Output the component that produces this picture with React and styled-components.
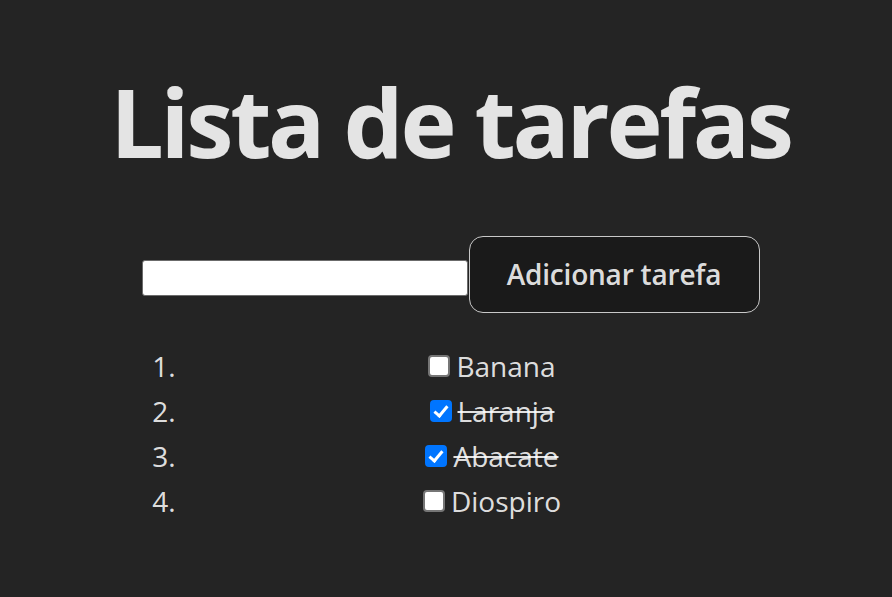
import React, { useState } from "react";
import styled, { createGlobalStyle } from "styled-components";

const GlobalStyle = createGlobalStyle`
  html, body {
    margin: 0;
    background-color: #242424;
  }

  body {
    font-family: "Open Sans", "Noto Sans", sans-serif;
    font-size: 28px;
    line-height: 1.5;
    color: rgba(255, 255, 255, 0.87);
    min-height: 100vh;
  }
`;

const Page = styled.div`
  width: 701px;
  margin-left: 100px;
  padding-top: 69px;
  text-align: center;
`;

const Title = styled.h1`
  margin: 0 -40px;
  font-size: 95px;
  font-weight: 700;
  line-height: 1.1;
  letter-spacing: -3.3px;
  white-space: nowrap;
  color: #e4e4e4;
`;

const Form = styled.form`
  margin-top: 62px;
  display: flex;
  justify-content: center;
  align-items: flex-start;
`;

const TaskInput = styled.input`
  box-sizing: border-box;
  width: 326px;
  height: 36px;
  margin-top: 24px;
  padding: 1px 4px;
  border: 1px solid #6b6b6b;
  border-radius: 3px;
  background: #ffffff;
  font-family: inherit;
  font-size: 20px;
  outline: none;
`;

const AddButton = styled.button`
  box-sizing: border-box;
  width: 291px;
  height: 77px;
  margin-left: 1px;
  border: 1px solid #c8c8c8;
  border-radius: 14px;
  background-color: #1a1a1a;
  color: rgba(255, 255, 255, 0.87);
  font-family: inherit;
  font-size: 28px;
  font-weight: 600;
  letter-spacing: -0.2px;
  cursor: pointer;
`;

const List = styled.ol`
  margin: 31px 0 0 0;
  padding-left: 83px;
`;

const Item = styled.li`
  line-height: 45px;
  text-align: center;
`;

const Check = styled.input`
  appearance: none;
  position: relative;
  box-sizing: border-box;
  width: 22px;
  height: 22px;
  margin: 0 6px 0 0;
  vertical-align: baseline;
  border: 2px solid #767676;
  border-radius: 4px;
  background: #ffffff;
  cursor: pointer;

  &:checked {
    border-color: #0075ff;
    background: #0075ff;
  }

  &:checked::after {
    content: "";
    position: absolute;
    left: 5px;
    top: 1px;
    width: 5px;
    height: 11px;
    border: solid #ffffff;
    border-width: 0 3px 3px 0;
    transform: rotate(40deg);
  }
`;

const Label = styled.span`
  text-decoration: ${(p) => (p.done ? "line-through" : "none")};
`;

const initialTasks = [
  { name: "Banana", done: false },
  { name: "Laranja", done: true },
  { name: "Abacate", done: true },
  { name: "Diospiro", done: false },
];

export default function App() {
  const [tasks, setTasks] = useState(initialTasks);
  const [text, setText] = useState("");

  const toggle = (i) =>
    setTasks((t) => t.map((task, j) => (j === i ? { ...task, done: !task.done } : task)));

  const add = (e) => {
    e.preventDefault();
    if (!text.trim()) return;
    setTasks((t) => [...t, { name: text.trim(), done: false }]);
    setText("");
  };

  return (
    <>
      <GlobalStyle />
      <Page>
        <Title>Lista de tarefas</Title>
        <Form onSubmit={add}>
          <TaskInput value={text} onChange={(e) => setText(e.target.value)} />
          <AddButton type="submit">Adicionar tarefa</AddButton>
        </Form>
        <List>
          {tasks.map((task, i) => (
            <Item key={i}>
              <Check type="checkbox" checked={task.done} onChange={() => toggle(i)} />
              <Label done={task.done}>{task.name}</Label>
            </Item>
          ))}
        </List>
      </Page>
    </>
  );
}
